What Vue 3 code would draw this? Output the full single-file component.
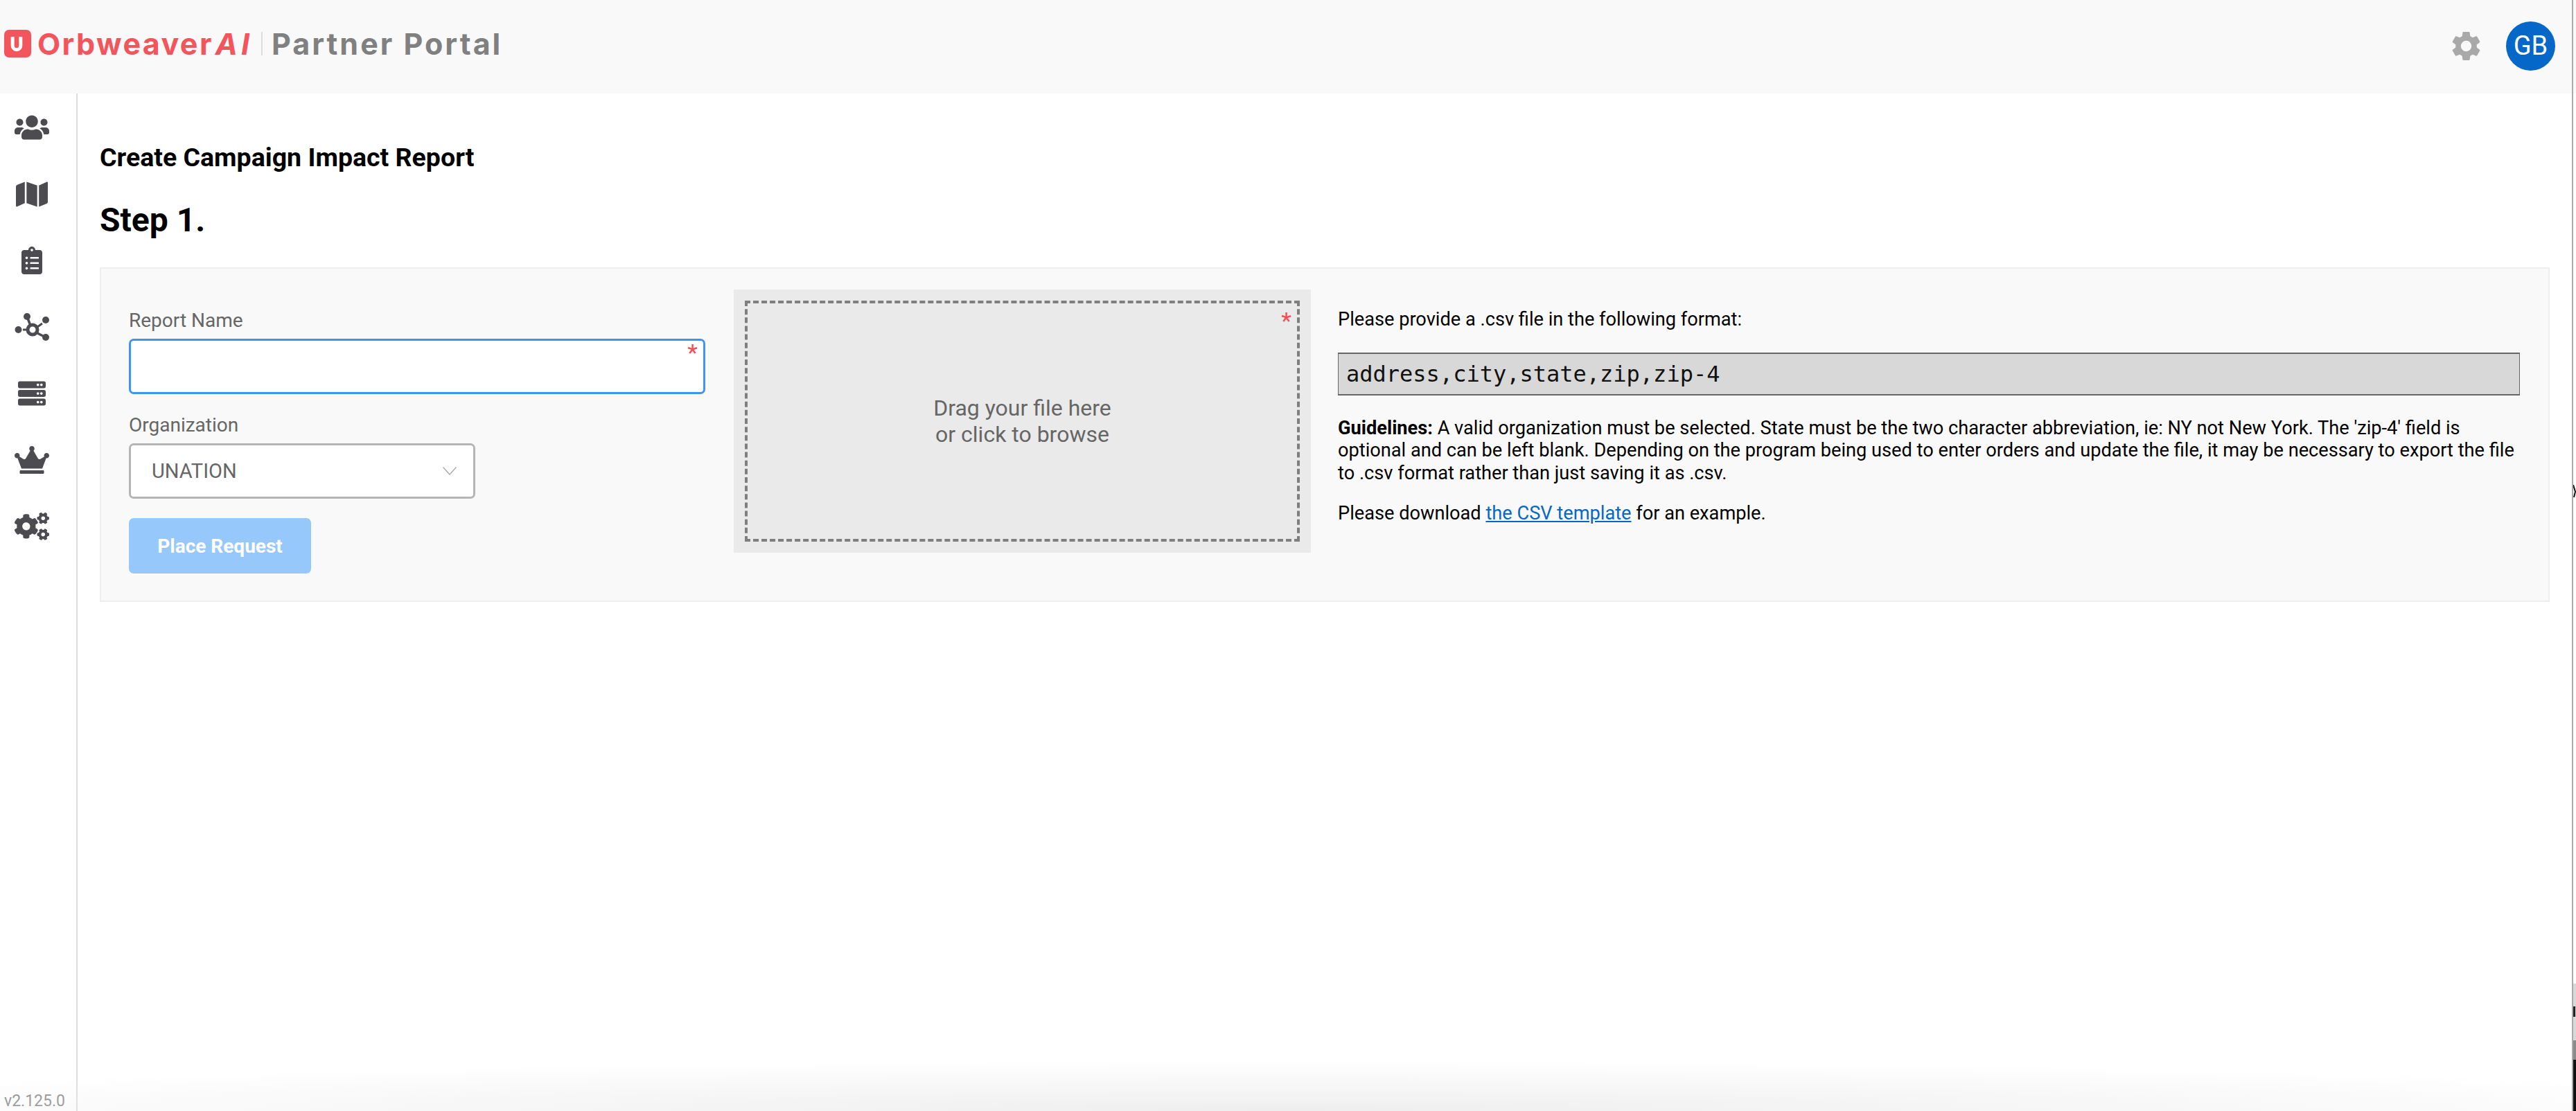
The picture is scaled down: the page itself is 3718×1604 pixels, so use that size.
<script setup>
const navIcons = [
  { w: 50, h: 40, vb: '0 0 640 512', d: 'M96 224c35.3 0 64-28.7 64-64s-28.7-64-64-64-64 28.7-64 64 28.7 64 64 64zm448 0c35.3 0 64-28.7 64-64s-28.7-64-64-64-64 28.7-64 64 28.7 64 64 64zm32 32h-64c-17.6 0-33.5 7.1-45.1 18.6 40.3 22.1 68.9 62 75.1 109.4h66c17.7 0 32-14.3 32-32v-32c0-35.3-28.7-64-64-64zm-256 0c61.9 0 112-50.1 112-112S381.9 32 320 32 208 82.1 208 144s50.1 112 112 112zm76.8 32h-8.3c-20.8 10-43.9 16-68.5 16s-47.6-6-68.5-16h-8.3C179.6 288 128 339.6 128 403.2V432c0 26.5 21.5 48 48 48h288c26.5 0 48-21.5 48-48v-28.8c0-63.6-51.6-115.2-115.2-115.2zm-223.7-13.4C161.5 263.1 145.6 256 128 256H64c-35.3 0-64 28.7-64 64v32c0 17.7 14.3 32 32 32h65.9c6.3-47.4 34.9-87.3 75.2-109.4z' },
  { w: 46, h: 41, vb: '0 0 576 512', d: 'M0 117.66v346.32c0 11.32 11.43 19.06 21.94 14.86L160 416V32L20.12 87.95A32.006 32.006 0 0 0 0 117.66zM192 416l192 64V96L192 32v384zM554.06 33.16L416 96v384l139.88-55.95A31.996 31.996 0 0 0 576 394.34V48.02c0-11.32-11.43-19.06-21.94-14.86z' },
  { w: 30, h: 40, vb: '0 0 384 512', d: 'M336 64h-80c0-35.3-28.7-64-64-64s-64 28.7-64 64H48C21.5 64 0 85.5 0 112v352c0 26.5 21.5 48 48 48h288c26.5 0 48-21.5 48-48V112c0-26.5-21.5-48-48-48zM96 424c-13.3 0-24-10.7-24-24s10.7-24 24-24 24 10.7 24 24-10.7 24-24 24zm0-96c-13.3 0-24-10.7-24-24s10.7-24 24-24 24 10.7 24 24-10.7 24-24 24zm0-96c-13.3 0-24-10.7-24-24s10.7-24 24-24 24 10.7 24 24-10.7 24-24 24zm96-192c13.3 0 24 10.7 24 24s-10.7 24-24 24-24-10.7-24-24 10.7-24 24-24zm128 368c0 4.4-3.6 8-8 8H168c-4.4 0-8-3.6-8-8v-16c0-4.4 3.6-8 8-8h144c4.4 0 8 3.6 8 8v16zm0-96c0 4.4-3.6 8-8 8H168c-4.4 0-8-3.6-8-8v-16c0-4.4 3.6-8 8-8h144c4.4 0 8 3.6 8 8v16zm0-96c0 4.4-3.6 8-8 8H168c-4.4 0-8-3.6-8-8v-16c0-4.4 3.6-8 8-8h144c4.4 0 8 3.6 8 8v16z' },
  { network: true, w: 50, h: 40, vb: '0 0 50 40' },
  { w: 40, h: 40, vb: '0 0 512 512', d: 'M480 160H32c-17.673 0-32-14.327-32-32V64c0-17.673 14.327-32 32-32h448c17.673 0 32 14.327 32 32v64c0 17.673-14.327 32-32 32zm-48-88c-13.255 0-24 10.745-24 24s10.745 24 24 24 24-10.745 24-24-10.745-24-24-24zm-64 0c-13.255 0-24 10.745-24 24s10.745 24 24 24 24-10.745 24-24-10.745-24-24-24zm112 248H32c-17.673 0-32-14.327-32-32v-64c0-17.673 14.327-32 32-32h448c17.673 0 32 14.327 32 32v64c0 17.673-14.327 32-32 32zm-48-88c-13.255 0-24 10.745-24 24s10.745 24 24 24 24-10.745 24-24-10.745-24-24-24zm-64 0c-13.255 0-24 10.745-24 24s10.745 24 24 24 24-10.745 24-24-10.745-24-24-24zm112 248H32c-17.673 0-32-14.327-32-32v-64c0-17.673 14.327-32 32-32h448c17.673 0 32 14.327 32 32v64c0 17.673-14.327 32-32 32zm-48-88c-13.255 0-24 10.745-24 24s10.745 24 24 24 24-10.745 24-24-10.745-24-24-24zm-64 0c-13.255 0-24 10.745-24 24s10.745 24 24 24 24-10.745 24-24-10.745-24-24-24z' },
  { w: 50, h: 40, vb: '0 0 640 512', d: 'M528 448H112c-8.8 0-16 7.2-16 16v32c0 8.8 7.2 16 16 16h416c8.8 0 16-7.2 16-16v-32c0-8.8-7.2-16-16-16zm64-320c-26.5 0-48 21.5-48 48 0 7.1 1.6 13.7 4.4 19.8L476 239.2c-15.4 9.2-35.3 4-44.2-11.6L350.3 85C361 76.2 368 63 368 48c0-26.5-21.5-48-48-48s-48 21.5-48 48c0 15 7 28.2 17.7 37l-81.5 142.6c-8.9 15.6-28.9 20.8-44.2 11.6l-72.3-43.4c2.7-6 4.4-12.7 4.4-19.8 0-26.5-21.5-48-48-48S0 149.5 0 176s21.5 48 48 48c2.6 0 5.2-.4 7.7-.8L128 416h384l72.3-192.8c2.5.4 5.1.8 7.7.8 26.5 0 48-21.5 48-48s-21.5-48-48-48z' },
  { w: 50, h: 40, vb: '0 0 640 512', d: 'M512.1 191l-8.2 14.3c-3 5.3-9.4 7.5-15.1 5.4-11.8-4.4-22.6-10.7-32.1-18.6-4.6-3.8-5.8-10.5-2.8-15.7l8.2-14.3c-6.9-8-12.3-17.3-15.9-27.4h-16.5c-6 0-11.2-4.3-12.2-10.3-2-12-2.1-24.6 0-37.1 1-6 6.2-10.4 12.2-10.4h16.5c3.6-10.1 9-19.4 15.9-27.4l-8.2-14.3c-3-5.2-1.9-11.9 2.8-15.7 9.5-7.9 20.4-14.2 32.1-18.6 5.7-2.1 12.1.1 15.1 5.4l8.2 14.3c10.5-1.9 21.2-1.9 31.7 0L552 6.3c3-5.3 9.4-7.5 15.1-5.4 11.8 4.4 22.6 10.7 32.1 18.6 4.6 3.8 5.8 10.5 2.8 15.7l-8.2 14.3c6.9 8 12.3 17.3 15.9 27.4h16.5c6 0 11.2 4.3 12.2 10.3 2 12 2.1 24.6 0 37.1-1 6-6.2 10.4-12.2 10.4h-16.5c-3.6 10.1-9 19.4-15.9 27.4l8.2 14.3c3 5.2 1.9 11.9-2.8 15.7-9.5 7.9-20.4 14.2-32.1 18.6-5.7 2.1-12.1-.1-15.1-5.4l-8.2-14.3c-10.4 1.9-21.2 1.9-31.7 0zm-10.5-58.8c38.5 29.6 82.4-14.3 52.8-52.8-38.5-29.7-82.4 14.3-52.8 52.8zM386.3 286.1l33.7 16.8c10.1 5.8 14.5 18.1 10.5 29.1-8.9 24.2-26.4 46.4-42.6 65.8-7.4 8.9-20.2 11.1-30.3 5.3l-29.1-16.8c-16 13.7-34.6 24.6-54.9 31.7v33.6c0 11.6-8.3 21.6-19.7 23.6-24.6 4.2-50.4 4.4-75.9 0-11.5-2-20-11.9-20-23.6V418c-20.3-7.2-38.9-18-54.9-31.7L74 403c-10 5.8-22.9 3.6-30.3-5.3-16.2-19.4-33.3-41.6-42.2-65.7-4-10.9.4-23.2 10.5-29.1l33.3-16.8c-3.9-20.9-3.9-42.4 0-63.4L12 205.8c-10.1-5.8-14.6-18.1-10.5-29 8.9-24.2 26-46.4 42.2-65.8 7.4-8.9 20.2-11.1 30.3-5.3l29.1 16.8c16-13.7 34.6-24.6 54.9-31.7V57.1c0-11.5 8.2-21.5 19.6-23.5 24.6-4.2 50.5-4.4 76-.1 11.5 2 20 11.9 20 23.6v33.6c20.3 7.2 38.9 18 54.9 31.7l29.1-16.8c10-5.8 22.9-3.6 30.3 5.3 16.2 19.4 33.2 41.6 42.1 65.8 4 10.9.1 23.2-10 29.1l-33.7 16.8c3.9 21 3.9 42.5 0 63.5zm-117.6 21.1c59.2-77-28.7-164.9-105.7-105.7-59.2 77 28.7 164.9 105.7 105.7zm243.4 182.7l-8.2 14.3c-3 5.3-9.4 7.5-15.1 5.4-11.8-4.4-22.6-10.7-32.1-18.6-4.6-3.8-5.8-10.5-2.8-15.7l8.2-14.3c-6.9-8-12.3-17.3-15.9-27.4h-16.5c-6 0-11.2-4.3-12.2-10.3-2-12-2.1-24.6 0-37.1 1-6 6.2-10.4 12.2-10.4h16.5c3.6-10.1 9-19.4 15.9-27.4l-8.2-14.3c-3-5.2-1.9-11.9 2.8-15.7 9.5-7.9 20.4-14.2 32.1-18.6 5.7-2.1 12.1.1 15.1 5.4l8.2 14.3c10.5-1.9 21.2-1.9 31.7 0l8.2-14.3c3-5.3 9.4-7.5 15.1-5.4 11.8 4.4 22.6 10.7 32.1 18.6 4.6 3.8 5.8 10.5 2.8 15.7l-8.2 14.3c6.9 8 12.3 17.3 15.9 27.4h16.5c6 0 11.2 4.3 12.2 10.3 2 12 2.1 24.6 0 37.1-1 6-6.2 10.4-12.2 10.4h-16.5c-3.6 10.1-9 19.4-15.9 27.4l8.2 14.3c3 5.2 1.9 11.9-2.8 15.7-9.5 7.9-20.4 14.2-32.1 18.6-5.7 2.1-12.1-.1-15.1-5.4l-8.2-14.3c-10.4 1.9-21.2 1.9-31.7 0zM501.6 431c38.5 29.6 82.4-14.3 52.8-52.8-38.5-29.6-82.4 14.3-52.8 52.8z' },
]
</script>

<template>
  <div class="screen">
    <div class="window">
      <header class="topbar">
        <div class="logo">
          <span class="logo-mark"><svg viewBox="0 0 39 40" width="39" height="40"><path d="M12.200 10v13a5.800 5.800 0 0 0 11.600 0V10" fill="none" stroke="#fff" stroke-width="5" /></svg></span>
          <span class="logo-name">Orbweaver<em>AI</em></span>
          <span class="logo-sep"></span>
          <span class="logo-sub">Partner Portal</span>
        </div>
        <div class="top-actions">
          <svg class="gear" viewBox="0 0 24 24" width="51" height="51"><path fill="#a9a9a9" d="M19.14 12.94c.04-.3.06-.61.06-.94 0-.32-.02-.64-.07-.94l2.03-1.58c.18-.14.23-.41.12-.61l-1.92-3.32c-.12-.22-.37-.29-.59-.22l-2.39.96c-.5-.38-1.03-.7-1.62-.94l-.36-2.54c-.04-.24-.24-.41-.48-.41h-3.84c-.24 0-.43.17-.47.41l-.36 2.54c-.59.24-1.13.57-1.62.94l-2.39-.96c-.22-.08-.47 0-.59.22L2.74 8.87c-.12.21-.08.47.12.61l2.03 1.58c-.05.3-.09.63-.09.94s.02.64.07.94l-2.03 1.58c-.18.14-.23.41-.12.61l1.92 3.32c.12.22.37.29.59.22l2.39-.96c.5.38 1.03.7 1.62.94l.36 2.54c.05.24.24.41.48.41h3.84c.24 0 .44-.17.47-.41l.36-2.54c.59-.24 1.13-.56 1.62-.94l2.39.96c.22.08.47 0 .59-.22l1.92-3.32c.12-.22.07-.47-.12-.61l-2.01-1.58zM12 15.6c-1.98 0-3.6-1.62-3.6-3.6s1.62-3.6 3.6-3.6 3.6 1.62 3.6 3.6-1.62 3.6-3.6 3.6z" /></svg>
          <div class="avatar">GB</div>
        </div>
      </header>
      <div class="body">
        <aside class="sidebar">
          <nav class="nav">
            <div v-for="(icon, i) in navIcons" :key="i" class="nav-item">
              <svg v-if="icon.network" :viewBox="icon.vb" :width="icon.w" :height="icon.h" fill="#4b4b50">
                <circle cx="5.500" cy="24" r="5" /><circle cx="18" cy="5" r="5" /><circle cx="45" cy="10" r="5" /><circle cx="45" cy="35" r="5" />
                <circle cx="26" cy="24" r="7" fill="none" stroke="#4b4b50" stroke-width="5" />
                <path d="M18 5l5 13M31 28l14 7" stroke="#4b4b50" stroke-width="3.500" />
                <path d="M12 24h6M33 20l7-5" stroke="#4b4b50" stroke-width="3" />
              </svg>
              <svg v-else :viewBox="icon.vb" :width="icon.w" :height="icon.h" fill="#4b4b50"><path :d="icon.d" /></svg>
            </div>
          </nav>
          <div class="version">v2.125.0</div>
        </aside>
        <main class="main">
          <h1 class="title">Create Campaign Impact Report</h1>
          <h2 class="step">Step 1.</h2>
          <section class="panel">
            <div class="form">
              <label class="label">Report Name</label>
              <div class="input"><span class="req">*</span></div>
              <label class="label org-label">Organization</label>
              <div class="select">UNATION
                <svg viewBox="0 0 20 12" width="20" height="12"><path d="M.5.5 10 11 19.500.5" fill="none" stroke="#aaa" stroke-width="1.500" /></svg>
              </div>
              <button class="submit">Place Request</button>
            </div>
            <div class="drop">
              <div class="drop-inner"><span class="req drop-req">*</span>Drag your file here<br />or click to browse</div>
            </div>
            <div class="help">
              <p class="help-first">Please provide a .csv file in the following format:</p>
              <code class="format">address,city,state,zip,zip-4</code>
              <p class="guide"><strong>Guidelines:</strong> A valid organization must be selected. State must be the two character abbreviation, ie: NY not New York. The 'zip-4' field is optional and can be left blank. Depending on the program being used to enter orders and update the file, it may be necessary to export the file to .csv format rather than just saving it as .csv.</p>
              <p class="dl">Please download <a href="#">the CSV template</a> for an example.</p>
            </div>
          </section>
        </main>
      </div>
      <div class="shade"></div>
    </div>
    <div class="edge">
      <div class="edge-top"></div>
      <svg class="edge-y" viewBox="0 0 4 18" width="4" height="18"><path d="M0 0 3 10 1 18" fill="none" stroke="#111" stroke-width="2" /></svg>
      <div class="edge-gray"><span class="edge-a"></span></div>
      <div class="edge-mid"></div>
      <div class="edge-dark"></div>
    </div>
  </div>
</template>

<style scoped>
.screen { display: flex; width: 3718px; height: 1604px; overflow: hidden; background: #fff; font-family: Roboto, "Liberation Sans", sans-serif; }
.window { position: relative; display: flex; flex-direction: column; width: 3712px; height: 1604px; flex: none; }
.edge { display: flex; flex-direction: column; width: 6px; flex: none; overflow: hidden; background: #fff; border-left: 2px solid #aaa; box-sizing: border-box; }
.edge-top { height: 135px; flex: none; background: #f9f9f9; }
.edge-y { margin-top: 565px; flex: none; }
.edge-gray { height: 82px; margin-top: auto; flex: none; padding-top: 33px; background: #d9d9d9; box-sizing: border-box; }
.edge-a { display: block; width: 3px; height: 15px; background: #222; }
.edge-mid { height: 28px; flex: none; background: #8a8a8a; }
.edge-dark { height: 74px; flex: none; background: #111; }
.topbar { display: flex; align-items: center; justify-content: space-between; height: 135px; flex: none; background: #f9f9f9; padding: 0 24px 0 6px; box-sizing: border-box; }
.logo { display: flex; align-items: center; margin-bottom: 10px; }
.logo-mark { display: flex; width: 39px; height: 40px; background: #f2565c; border-radius: 7px; }
.logo-name { margin-left: 9px; font: 700 43px Inter, sans-serif; letter-spacing: 2.400px; color: #f2565c; }
.logo-name em { margin-left: 3px; font-style: italic; font-weight: 700; letter-spacing: 5px; }
.logo-sep { width: 2px; height: 34px; margin: 0 13px 0 12px; background: #ddd; }
.logo-sub { font: 700 43px Inter, sans-serif; letter-spacing: 3px; color: #808080; }
.top-actions { display: flex; align-items: center; gap: 32px; margin-bottom: 3px; }
.avatar { display: flex; align-items: center; justify-content: center; width: 71px; height: 71px; border-radius: 50%; background: #0567c8; color: #fff; font-size: 38px; }
.body { display: flex; flex: 1; min-height: 0; }
.sidebar { position: relative; display: flex; flex-direction: column; width: 112px; flex: none; border-right: 2px solid #ddd; box-sizing: border-box; }
.nav { display: flex; flex-direction: column; padding-top: 1px; }
.nav-item { display: flex; align-items: center; justify-content: center; width: 92px; height: 96px; }
.version { margin-top: auto; padding: 0 0 0 6px; font-size: 23px; line-height: 28px; color: #8a8a8a; }
.main { flex: 1; padding: 69px 32px 0; }
.title { margin: 0; font-size: 37.500px; line-height: 46px; font-weight: 700; color: #000; }
.step { margin: 40px 0 0; font-size: 48px; line-height: 56px; font-weight: 700; color: #000; }
.panel { display: flex; margin-top: 40px; height: 483px; background: #f9f9f9; border: 2px solid #eee; box-sizing: border-box; }
.form { display: flex; flex-direction: column; align-items: flex-start; width: 832px; margin-left: 40px; flex: none; padding-top: 58px; }
.label { font-size: 28px; line-height: 33px; color: #666; }
.input { position: relative; width: 832px; height: 80px; margin-top: 10px; background: #fff; border: 3px solid #3d94f6; border-radius: 7px; box-sizing: border-box; }
.req { position: absolute; color: #ef4f55; font-size: 34px; line-height: 34px; }
.input .req { top: 0; right: 8px; }
.org-label { margin-top: 28px; }
.select { display: flex; align-items: center; justify-content: space-between; width: 500px; height: 80px; margin-top: 10px; padding: 0 24px 0 30px; background: #fff; border: 3px solid #b5b5b5; border-radius: 7px; box-sizing: border-box; font-size: 29px; color: #666; }
.submit { width: 263px; height: 80px; margin-top: 28px; border: 0; border-radius: 7px; background: #97c8fb; color: #fff; font: 700 28px Roboto, sans-serif; }
.drop { width: 833px; height: 380px; margin: 30px 0 0 41px; padding: 16px; flex: none; background: #eaeaea; box-sizing: border-box; }
.drop-inner { position: relative; display: flex; align-items: center; justify-content: center; height: 100%; border: 4px dashed #7f7f7f; box-sizing: border-box; text-align: center; font-size: 32px; line-height: 38px; color: #666; }
.drop-req { top: 8px; right: 8px; }
.help { flex: 1; margin: 0 41px 0 39px; padding-top: 57px; font-size: 27.200px; line-height: 32.500px; color: #000; }
.help p { margin: 0; }
.format { display: block; height: 62px; margin-top: 31px; padding-left: 11px; background: #d8d8d8; border: solid #666; border-width: 2px 1px; box-sizing: border-box; font: 32px/58px "DejaVu Sans Mono", monospace; color: #111; }
.help .guide { margin-top: 31px; }
.help .dl { margin-top: 26px; }
.dl a { color: #0567c8; }
.shade { position: absolute; left: 0; right: 0; bottom: 0; height: 74px; background: radial-gradient(ellipse 62% 100% at 50% 100%, #eeeeee 0%, rgba(238,238,238,0) 100%); pointer-events: none; }
</style>
